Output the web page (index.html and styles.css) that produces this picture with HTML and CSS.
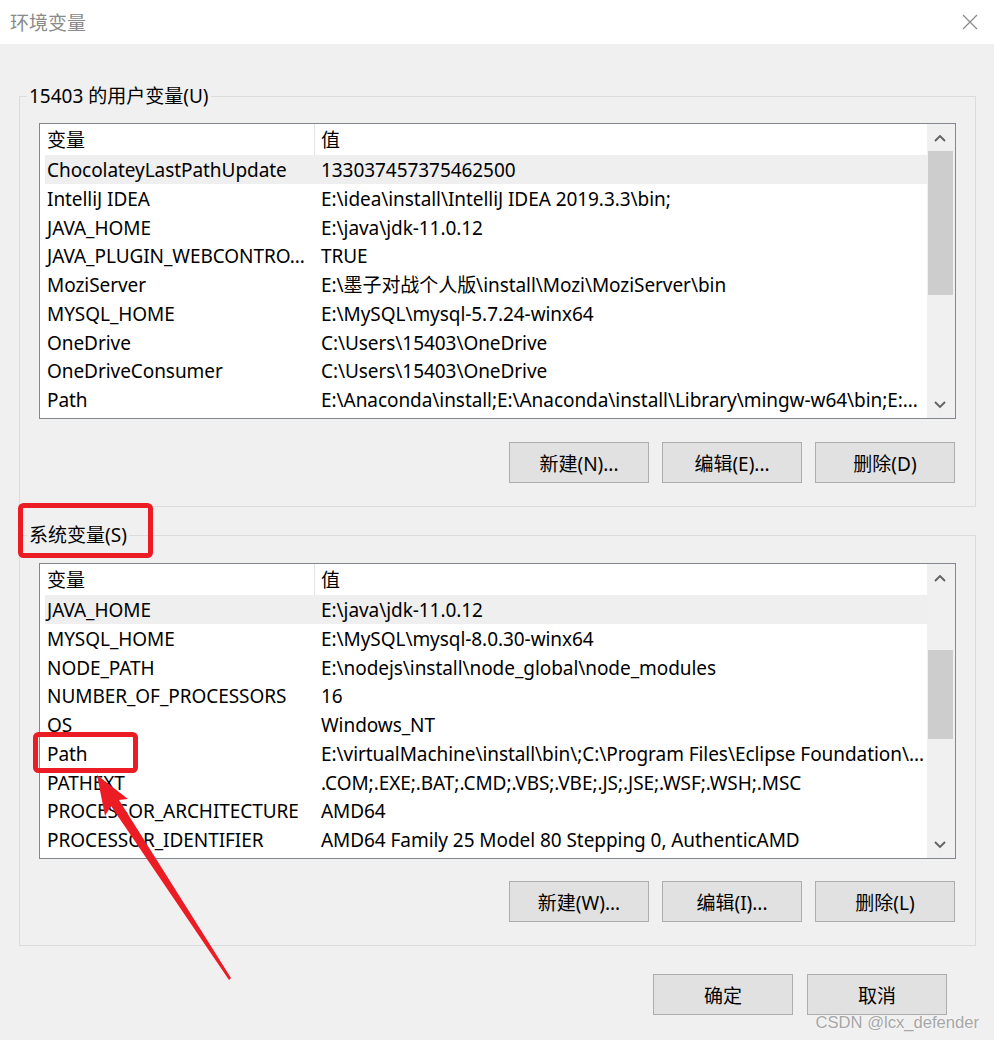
FILE: index.html
```html
<!DOCTYPE html>
<html lang="zh-CN">
<head>
    <meta charset="UTF-8">
    <title>环境变量</title>
    <link rel="stylesheet" href="styles.css">
</head>
<body>
    <div class="dialog">
        <div class="titlebar">
            <span class="title">环境变量</span>
            <svg class="close" width="16" height="16" viewBox="0 0 16 16">
                <path d="M1 1 L15 15 M15 1 L1 15" stroke="#8a8a8a" stroke-width="1.2" fill="none"/>
            </svg>
        </div>

        <fieldset class="group">
            <legend>15403 的用户变量(U)</legend>
            <div class="group-body">
                <div class="listview">
                    <div class="list-body">
                        <div class="list-head"><span>变量</span><span class="col-value">值</span></div>
                        <div class="row selected"><span>ChocolateyLastPathUpdate</span><span>133037457375462500</span></div>
                        <div class="row"><span>IntelliJ IDEA</span><span>E:\idea\install\IntelliJ IDEA 2019.3.3\bin;</span></div>
                        <div class="row"><span>JAVA_HOME</span><span>E:\java\jdk-11.0.12</span></div>
                        <div class="row"><span>JAVA_PLUGIN_WEBCONTRO...</span><span>TRUE</span></div>
                        <div class="row"><span>MoziServer</span><span>E:\墨子对战个人版\install\Mozi\MoziServer\bin</span></div>
                        <div class="row"><span>MYSQL_HOME</span><span>E:\MySQL\mysql-5.7.24-winx64</span></div>
                        <div class="row"><span>OneDrive</span><span>C:\Users\15403\OneDrive</span></div>
                        <div class="row"><span>OneDriveConsumer</span><span>C:\Users\15403\OneDrive</span></div>
                        <div class="row"><span>Path</span><span>E:\Anaconda\install;E:\Anaconda\install\Library\mingw-w64\bin;E:...</span></div>
                    </div>
                    <div class="scrollbar">
                        <div class="arrow">
                            <svg width="12" height="8" viewBox="0 0 12 8"><polyline points="1,7 6,2 11,7" fill="none" stroke="#606060" stroke-width="1.8"/></svg>
                        </div>
                        <div class="track"><div class="thumb thumb-user"></div></div>
                        <div class="arrow">
                            <svg width="12" height="8" viewBox="0 0 12 8"><polyline points="1,1 6,6 11,1" fill="none" stroke="#606060" stroke-width="1.8"/></svg>
                        </div>
                    </div>
                </div>
                <div class="btn-row">
                    <button>新建(N)...</button>
                    <button>编辑(E)...</button>
                    <button>删除(D)</button>
                </div>
            </div>
        </fieldset>

        <fieldset class="group group-system">
            <legend>系统变量(S)</legend>
            <div class="group-body">
                <div class="listview">
                    <div class="list-body">
                        <div class="list-head"><span>变量</span><span class="col-value">值</span></div>
                        <div class="row selected"><span>JAVA_HOME</span><span>E:\java\jdk-11.0.12</span></div>
                        <div class="row"><span>MYSQL_HOME</span><span>E:\MySQL\mysql-8.0.30-winx64</span></div>
                        <div class="row"><span>NODE_PATH</span><span>E:\nodejs\install\node_global\node_modules</span></div>
                        <div class="row"><span>NUMBER_OF_PROCESSORS</span><span>16</span></div>
                        <div class="row"><span>OS</span><span>Windows_NT</span></div>
                        <div class="row"><span>Path</span><span>E:\virtualMachine\install\bin\;C:\Program Files\Eclipse Foundation\...</span></div>
                        <div class="row"><span>PATHEXT</span><span>.COM;.EXE;.BAT;.CMD;.VBS;.VBE;.JS;.JSE;.WSF;.WSH;.MSC</span></div>
                        <div class="row"><span>PROCESSOR_ARCHITECTURE</span><span>AMD64</span></div>
                        <div class="row"><span>PROCESSOR_IDENTIFIER</span><span>AMD64 Family 25 Model 80 Stepping 0, AuthenticAMD</span></div>
                    </div>
                    <div class="scrollbar">
                        <div class="arrow">
                            <svg width="12" height="8" viewBox="0 0 12 8"><polyline points="1,7 6,2 11,7" fill="none" stroke="#606060" stroke-width="1.8"/></svg>
                        </div>
                        <div class="track"><div class="thumb thumb-system"></div></div>
                        <div class="arrow">
                            <svg width="12" height="8" viewBox="0 0 12 8"><polyline points="1,1 6,6 11,1" fill="none" stroke="#606060" stroke-width="1.8"/></svg>
                        </div>
                    </div>
                </div>
                <div class="btn-row">
                    <button>新建(W)...</button>
                    <button>编辑(I)...</button>
                    <button>删除(L)</button>
                </div>
            </div>
        </fieldset>

        <div class="footer">
            <button>确定</button>
            <button>取消</button>
        </div>

        <!-- red marks drawn on top of the dialog -->
        <svg class="marks" width="994" height="1040" viewBox="0 0 994 1040">
            <rect x="20.5" y="505.5" width="130" height="50" rx="3" fill="none" stroke="#ec1c24" stroke-width="5"/>
            <rect x="35.5" y="734.5" width="100" height="36" rx="3" fill="none" stroke="#ec1c24" stroke-width="5"/>
            <polygon points="97,775 128,799 119,800 231,978 229,980 111,806 105,816" fill="#ec1c24"/>
        </svg>

        <div class="watermark">CSDN @lcx_defender</div>
    </div>
</body>
</html>
```

FILE: styles.css
```css
body {
    margin: 0;
    background-color: #f0f0f0;
    font-family: "Noto Sans", "Noto Sans CJK SC", sans-serif;
    font-size: 19px;
    color: #000;
}

.dialog {
    position: relative;
    width: 994px;
    height: 1040px;
    overflow: hidden;
    background-color: #f0f0f0;
}

.titlebar {
    height: 44px;
    background-color: #fff;
    display: flex;
    align-items: center;
    justify-content: space-between;
    padding: 0 16px 0 10px;
}

.title {
    color: #8a8a8a;
    font-size: 19px;
}

/* group boxes */
.group {
    margin: 40px 18px 0 19px;
    padding: 0;
    border: 1px solid #dcdcdc;
    min-width: 0;
}

.group-system {
    margin-top: 16px;
}

.group legend {
    margin-left: 7px;
    padding: 0 2px;
    line-height: 24px;
    font-size: 19px;
}

.group-body {
    padding: 15px 19px 23px 19px;
}

.group-system .group-body {
    padding-top: 16px;
}

/* list view */
.listview {
    height: 296px;
    box-sizing: border-box;
    border: 1px solid #828790;
    background-color: #fff;
    display: flex;
}

.list-body {
    flex: 1;
    min-width: 0;
    overflow: hidden;
}

.list-head {
    display: grid;
    grid-template-columns: 274px 1fr;
    height: 31px;
    line-height: 32px;
}

.list-head span {
    padding-left: 7px;
}

.list-head .col-value {
    border-left: 1px solid #e5e5e5;
    padding-left: 6px;
}

.row {
    display: grid;
    grid-template-columns: 269px 1fr;
    margin-left: 5px;
    height: 28.75px;
    line-height: 30px;
    letter-spacing: -0.06px;
}

.row span {
    white-space: nowrap;
    overflow: hidden;
    text-overflow: ellipsis;
}

.row span:first-child {
    padding-left: 2px;
}

.row span:last-child {
    padding-left: 7px;
}

.row.selected {
    background-color: #efefef;
}

/* scroll bar */
.scrollbar {
    width: 28px;
    background-color: #f0f0f0;
    display: flex;
    flex-direction: column;
}

.scrollbar .arrow {
    height: 27px;
    display: flex;
    align-items: center;
    justify-content: center;
    padding-right: 2px;
}

.track {
    flex: 1;
}

.thumb {
    width: 25px;
    margin-left: 1px;
    background-color: #cdcdcd;
}

.thumb-user {
    height: 144px;
}

.thumb-system {
    margin-top: 59px;
    height: 89px;
}

/* buttons */
button {
    width: 140px;
    height: 41px;
    background-color: #e1e1e1;
    border: 1px solid #adadad;
    border-radius: 0;
    font-family: "Noto Sans", "Noto Sans CJK SC", sans-serif;
    font-size: 19px;
    color: #000;
    padding: 0;
}

.btn-row {
    display: flex;
    justify-content: flex-end;
    gap: 13px;
    margin-top: 23px;
    padding-right: 1px;
}

.group-system .btn-row {
    margin-top: 22px;
}

.footer {
    display: flex;
    justify-content: flex-end;
    gap: 14px;
    margin-top: 28px;
    padding-right: 47px;
}

.marks {
    position: absolute;
    top: 0;
    left: 0;
    pointer-events: none;
}

.watermark {
    position: absolute;
    right: 15px;
    bottom: 7px;
    font-family: "Liberation Sans", Arial, sans-serif;
    font-size: 16.6px;
    color: #a6a6a6;
    text-shadow: 0 0 2px #fff;
}
```
